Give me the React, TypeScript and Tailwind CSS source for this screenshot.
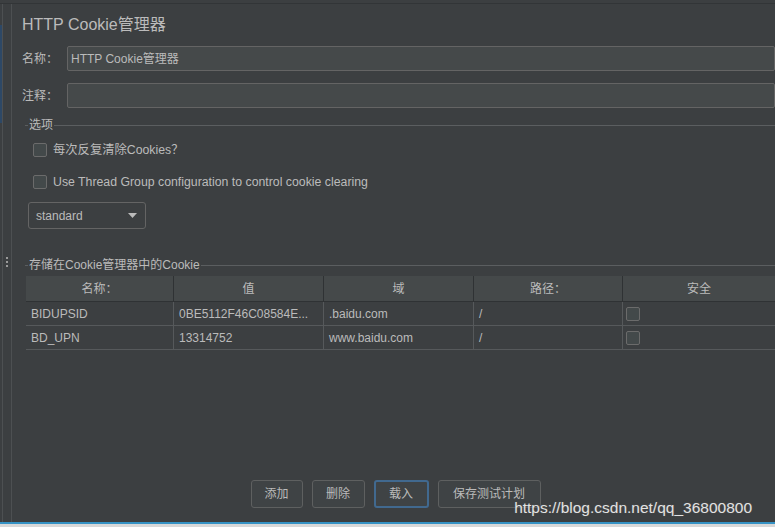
const FONT = "font-['Liberation_Sans','Noto_Sans_CJK_SC',sans-serif]";

const cols = [
  { title: "名称：", w: "w-[148px]" },
  { title: "值", w: "w-[150px]" },
  { title: "域", w: "w-[150px]" },
  { title: "路径：", w: "w-[149px]" },
  { title: "安全", w: "flex-1" },
];

const rows = [
  ["BIDUPSID", "0BE5112F46C08584E...", ".baidu.com", "/"],
  ["BD_UPN", "13314752", "www.baidu.com", "/"],
];

function Legend({ text }: { text: string }) {
  return (
    <div className="flex h-[14px] items-center">
      <div className="h-px w-[3px] bg-[#5b5e60]" />
      <span className="px-[1px] text-[12px] leading-[14px]">{text}</span>
      <div className="h-px flex-1 bg-[#5b5e60]" />
    </div>
  );
}

function Box({ className = "" }: { className?: string }) {
  return (
    <div
      className={`h-[14px] w-[14px] shrink-0 rounded-[2px] border border-[#6b6b6b] bg-[#43494a] ${className}`}
    />
  );
}

function Field({ label, value }: { label: string; value: string }) {
  return (
    <div className="flex h-[25px] items-center">
      <span className="w-[55px] shrink-0 whitespace-nowrap pl-[10px] text-[12px]">{label}</span>
      <div className="flex h-full flex-1 items-center rounded-[2px] border border-[#646464] bg-[#45494a] pl-[3px] text-[12px] text-[#bbbbbb]">
        {value}
      </div>
    </div>
  );
}

export default function App() {
  return (
    <div
      className={`${FONT} flex h-[527px] w-[775px] flex-col overflow-hidden bg-[#3c3f41] text-[#bbbbbb]`}
    >
      <div className="h-[4px] border-b border-[#323537]" />
      <div className="flex flex-1">
        {/* splitter strip */}
        <div className="flex w-[12px] border-r border-[#4d5052]">
          <div className="flex w-[3px] flex-col border-r border-[#4d5052]">
            <div className="mt-[21px] h-[98px] w-[2px] bg-[#2d4866]" />
          </div>
          <div className="flex flex-1 flex-col items-center pt-[253px]">
            <div className="mb-[2px] h-[2px] w-[2px] bg-[#9a9a9a]" />
            <div className="mb-[2px] h-[2px] w-[2px] bg-[#9a9a9a]" />
            <div className="h-[2px] w-[2px] bg-[#9a9a9a]" />
          </div>
        </div>

        {/* main panel */}
        <div className="relative flex flex-1 flex-col">
          <div className="mt-[10px] h-[22px] pl-[10px] text-[16px] leading-[22px] text-[#bbbbbb]">
            HTTP Cookie管理器
          </div>
          <div className="mt-[10px]">
            <Field label="名称：" value="HTTP Cookie管理器" />
          </div>
          <div className="mt-[12px]">
            <Field label="注释：" value="" />
          </div>

          <div className="mt-[10px] pl-[13px]">
            <Legend text="选项" />
          </div>
          <div className="mt-[11px] flex h-[14px] items-center pl-[21px]">
            <Box />
            <span className="ml-[6px] text-[12.3px]">每次反复清除Cookies？</span>
          </div>
          <div className="mt-[18px] flex h-[14px] items-center pl-[21px]">
            <Box />
            <span className="ml-[6px] text-[12.3px]">
              Use Thread Group configuration to control cookie clearing
            </span>
          </div>
          <div className="mt-[13px] pl-[16px]">
            <div className="flex h-[27px] w-[118px] items-center justify-between rounded-[3px] border border-[#646464] bg-[#3c3f41] pl-[7px] pr-[8px] text-[12px]">
              <span>standard</span>
              <svg width="9" height="5" viewBox="0 0 9 5">
                <path d="M0 0h9L4.5 5z" fill="#bbbbbb" />
              </svg>
            </div>
          </div>

          <div className="mt-[29px] pl-[13px]">
            <Legend text="存储在Cookie管理器中的Cookie" />
          </div>
          <div className="mt-[4px] ml-[14px] flex flex-col text-[12px]">
            <div className="flex h-[26px] border-b border-[#2f3234] bg-[#45494a]">
              {cols.map((c, i) => (
                <div
                  key={c.title}
                  className={`${c.w} flex items-center justify-center ${
                    i < cols.length - 1 ? "border-r border-[#2f3234]" : ""
                  }`}
                >
                  {c.title}
                </div>
              ))}
            </div>
            {rows.map((r) => (
              <div key={r[0]} className="flex h-[24px] border-b border-[#56595b]">
                {r.map((cell, i) => (
                  <div
                    key={i}
                    className={`${cols[i].w} flex items-center border-r border-[#56595b] pl-[5px]`}
                  >
                    {cell}
                  </div>
                ))}
                <div className="flex flex-1 items-center pl-[3px]">
                  <Box className="h-[13px]" />
                </div>
              </div>
            ))}
          </div>

          <div className="flex-1" />
          <div className="mb-[14px] flex justify-center gap-[9px] pl-[4px] text-[12px]">
            <button className="h-[28px] w-[52px] rounded-[3px] border border-[#5e6060] bg-[#3f4345]">
              添加
            </button>
            <button className="h-[28px] w-[53px] rounded-[3px] border border-[#5e6060] bg-[#3f4345]">
              删除
            </button>
            <button className="h-[28px] w-[55px] rounded-[3px] border-2 border-[#41698f] bg-[#3f4345]">
              载入
            </button>
            <button className="h-[28px] w-[103px] rounded-[3px] border border-[#5e6060] bg-[#3f4345]">
              保存测试计划
            </button>
          </div>

          <div className="absolute bottom-[5px] right-[23px] text-[15.5px] leading-[18px] text-[#e2e2e2] [text-shadow:0_0_2px_#555]">
            https://blog.csdn.net/qq_36800800
          </div>
        </div>
      </div>
      <div className="h-[2px] bg-[#3592c4]" />
      <div className="h-[3px] bg-[#d8d8d8]" />
    </div>
  );
}
